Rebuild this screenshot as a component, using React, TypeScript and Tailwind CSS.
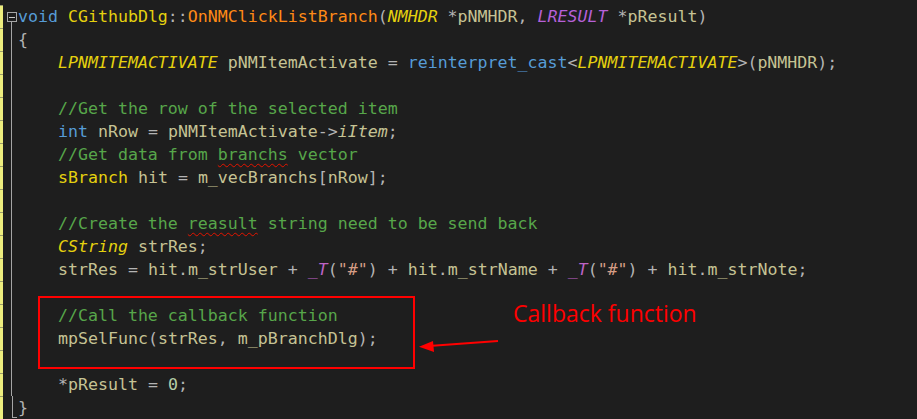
import React from "react";

type Tok = [string, string];

const P = "text-[#b4b4b4]";
const ID = "text-[#c6c394]";
const KW = "text-[#569cd6]";
const TY = "text-[#e5d10e]";
const TYI = "text-[#e5d10e] italic";
const CM = "text-[#57a64a]";
const FN = "text-[#ff8a16]";
const MAC = "text-[#bd63c5] italic";
const STR = "text-[#d69d85]";
const NUM = "text-[#b5cea8]";
const SQ = "text-[#57a64a] underline decoration-wavy decoration-[#e51400] decoration-1 underline-offset-[3px]";

const lines: Tok[][] = [
  [["void ", KW], ["CGithubDlg", TY], ["::", P], ["OnNMClickListBranch", FN], ["(", P], ["NMHDR", TYI], [" *", P], ["pNMHDR", ID], [", ", P], ["LRESULT", "text-[#b660d8] italic"], [" *", P], ["pResult", ID], [")", P]],
  [["{", P]],
  [["    ", P], ["LPNMITEMACTIVATE", TYI], [" ", P], ["pNMItemActivate", ID], [" = ", P], ["reinterpret_cast", KW], ["<", P], ["LPNMITEMACTIVATE", TYI], [">(", P], ["pNMHDR", ID], [");", P]],
  [],
  [["    //Get the row of the selected item", CM]],
  [["    ", P], ["int", KW], [" ", P], ["nRow", ID], [" = ", P], ["pNMItemActivate", ID], ["->", P], ["iItem", ID + " italic"], [";", P]],
  [["    //Get data from ", CM], ["branchs", SQ], [" vector", CM]],
  [["    ", P], ["sBranch", TY], [" ", P], ["hit", ID], [" = ", P], ["m_vecBranchs", ID], ["[", P], ["nRow", ID], ["];", P]],
  [],
  [["    //Create the ", CM], ["reasult", SQ], [" string need to be send back", CM]],
  [["    ", P], ["CString", TYI], [" ", P], ["strRes", ID], [";", P]],
  [["    ", P], ["strRes", ID], [" = ", P], ["hit", ID], [".", P], ["m_strUser", ID], [" + ", P], ["_T", MAC], ["(", P], ["\"#\"", STR], [")", P], [" + ", P], ["hit", ID], [".", P], ["m_strName", ID], [" + ", P], ["_T", MAC], ["(", P], ["\"#\"", STR], [")", P], [" + ", P], ["hit", ID], [".", P], ["m_strNote", ID], [";", P]],
  [],
  [["    //Call the callback function", CM]],
  [["    ", P], ["mpSelFunc", ID], ["(", P], ["strRes", ID], [", ", P], ["m_pBranchDlg", ID], [");", P]],
  [],
  [["    ", P], ["*", P], ["pResult", ID], [" = ", P], ["0", NUM], [";", P]],
  [["}", P]],
];

function Gutter({ i, last }: { i: number; last: boolean }) {
  return (
    <div className="flex h-full w-[18px] shrink-0">
      <div className="h-full w-[3px] border-t border-[#9c9c6a] bg-[#eded7e]" />
      <div className="ml-[3px] flex h-full w-[11px] flex-col items-center">
        {i === 0 && (
          <div className="mt-[7px] flex h-[10px] w-[10px] shrink-0 items-center justify-center border border-[#a5a5a5]">
            <div className="h-px w-[6px] bg-[#c8c8c8]" />
          </div>
        )}
        {last ? (
          <div className="flex h-[22px] flex-col items-start pl-[5px]">
            <div className="h-[21px] w-px bg-[#a5a5a5]" />
            <div className="h-px w-[5px] bg-[#a5a5a5]" />
          </div>
        ) : (
          <div className="w-px flex-1 bg-[#a5a5a5]" />
        )}
      </div>
    </div>
  );
}

export default function App() {
  return (
    <div className="relative h-[419px] w-[917px] overflow-hidden bg-[#1e1e1e] pt-[5px] font-['DejaVu_Sans_Mono',monospace] text-[16.6px]">
      {lines.map((toks, i) => (
        <div key={i} className="flex h-[23px] items-center">
          <Gutter i={i} last={i === lines.length - 1} />
          <pre className="m-0 whitespace-pre font-['DejaVu_Sans_Mono',monospace] leading-[23px]">
            {toks.map(([t, c], j) => (
              <span key={j} className={c}>
                {t}
              </span>
            ))}
          </pre>
        </div>
      ))}

      {/* annotation overlay */}
      <div className="absolute left-[38px] top-[296px] h-[73px] w-[377px] border-2 border-[#ff0000]" />
      <svg className="absolute left-[415px] top-[334px]" width="90" height="20" viewBox="0 0 90 20">
        <line x1="14" y1="12" x2="83" y2="7" stroke="#ff0000" strokeWidth="2" />
        <polygon points="4,12.8 18,7 19,18" fill="#ff0000" />
      </svg>
      <div className="absolute left-[513px] top-[299px] font-['Open_Sans',sans-serif] text-[23px] leading-[28px] text-[#ff0000]">
        Callback function
      </div>
    </div>
  );
}
